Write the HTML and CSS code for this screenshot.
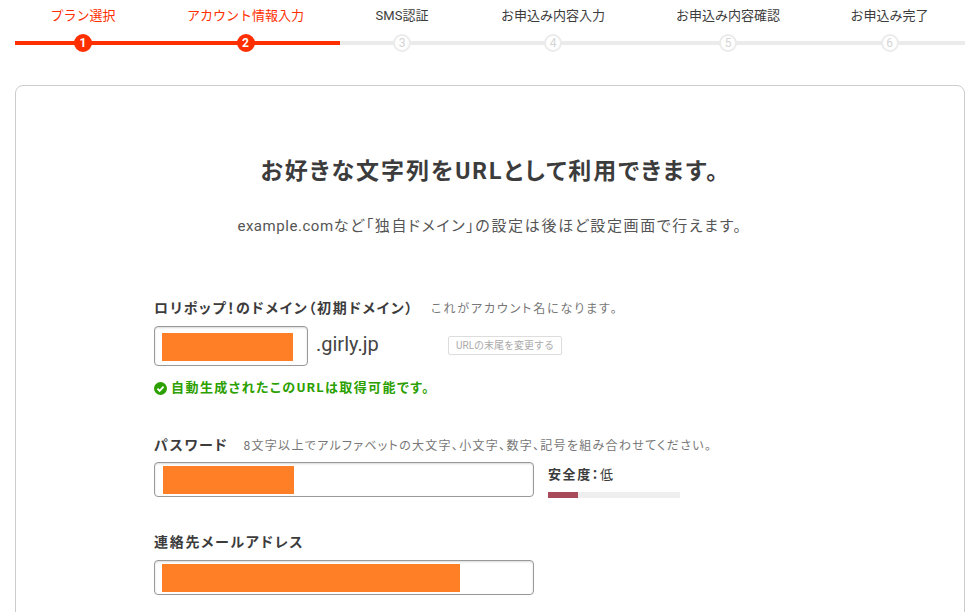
FILE: index.html
```html
<!DOCTYPE html>
<html lang="ja">

<head>
  <meta charset="UTF-8">
  <title>アカウント情報入力</title>
  <link rel="stylesheet" href="styles.css">
</head>

<body>
  <ol class="steps">
    <li class="step done"><span class="step-name">プラン選択</span><span class="step-num">1</span></li>
    <li class="step done"><span class="step-name">アカウント情報入力</span><span class="step-num">2</span></li>
    <li class="step"><span class="step-name">SMS認証</span><span class="step-num">3</span></li>
    <li class="step"><span class="step-name">お申込み内容入力</span><span class="step-num">4</span></li>
    <li class="step"><span class="step-name">お申込み内容確認</span><span class="step-num">5</span></li>
    <li class="step"><span class="step-name">お申込み完了</span><span class="step-num">6</span></li>
  </ol>

  <main class="card">
    <h1 class="title">お好きな文字列をURLとして利用できます。</h1>
    <p class="lead"><span class="lead-domain">example.com</span>など「独自ドメイン」の設定は後ほど設定画面で行えます。</p>

    <section class="group group-domain">
      <div class="label-row">
        <span class="label">ロリポップ！のドメイン（初期ドメイン）</span>
        <span class="hint hint-domain">これがアカウント名になります。</span>
      </div>
      <div class="field-row">
        <div class="field field-domain"><span class="mask mask-domain"></span></div>
        <span class="suffix">.girly.jp</span>
        <button class="change-btn" type="button">URLの末尾を変更する</button>
      </div>
      <p class="ok">
        <svg class="ok-icon" width="13" height="13" viewBox="0 0 13 13">
          <circle cx="6.5" cy="6.5" r="6.5" fill="#2ca000"/>
          <path d="M3.4 6.7 5.6 8.9 9.6 4.6" fill="none" stroke="#fff" stroke-width="1.9"/>
        </svg>
        自動生成されたこのURLは取得可能です。
      </p>
    </section>

    <section class="group group-password">
      <div class="label-row">
        <span class="label">パスワード</span>
        <span class="hint hint-password">8文字以上でアルファベットの大文字、小文字、数字、記号を組み合わせてください。</span>
      </div>
      <div class="field-row">
        <div class="field field-wide"><span class="mask mask-password"></span></div>
        <div class="strength">
          <div class="strength-text"><b>安全度：</b>低</div>
          <div class="strength-bar"><div class="strength-fill" style="width: 23%"></div></div>
        </div>
      </div>
    </section>

    <section class="group group-mail">
      <div class="label-row">
        <span class="label">連絡先メールアドレス</span>
      </div>
      <div class="field field-wide"><span class="mask mask-mail"></span></div>
    </section>
  </main>
</body>
</html>
```

FILE: styles.css
```css
html, body {
  height: 612px;
  overflow: hidden;
}
body {
  margin: 0;
  padding: 0 14px 0 15px;
  background: #fff;
  color: #3c3c3c;
  font-family: Roboto, "Noto Sans CJK JP", sans-serif;
}

/* step bar */
.steps {
  display: grid;
  grid-template-columns: 136px 189px 124px 178px 172px 151px;
  margin: 0;
  padding: 0;
  list-style: none;
}
.step {
  display: flex;
  flex-direction: column;
  align-items: center;
  height: 52px;
  background: linear-gradient(#ebebeb, #ebebeb) 0 41px / 100% 4px no-repeat;
}
.step.done {
  background-image: linear-gradient(#ff2f00, #ff2f00);
}
.step-name {
  height: 34px;
  padding-top: 6px;
  box-sizing: border-box;
  font-size: 13px;
  line-height: 19px;
  white-space: nowrap;
}
.done .step-name {
  color: #ff2f00;
}
.step-num {
  box-sizing: border-box;
  width: 18px;
  height: 18px;
  border: 2px solid #ebebeb;
  border-radius: 50%;
  background: #fff;
  color: #d4d4d4;
  font-size: 12px;
  line-height: 14px;
  text-align: center;
}
.done .step-num {
  border-color: #ff2f00;
  background: #ff2f00;
  color: #fff;
  font-weight: 700;
}

/* card */
.card {
  margin-top: 33px;
  padding: 0 138px 60px;
  height: 700px;
  border: 1px solid #ccc;
  border-radius: 8px;
  font-feature-settings: "palt";
}
.title {
  margin: 0;
  padding-top: 69px;
  font-size: 23px;
  line-height: 34px;
  font-weight: 700;
  letter-spacing: 2px;
  text-align: center;
}
.lead {
  margin: 26px 0 0;
  font-size: 15px;
  line-height: 22px;
  letter-spacing: 1.65px;
  text-align: center;
  color: #555;
}
.lead-domain {
  letter-spacing: 0.55px;
}

/* form */
.group-domain {
  margin-top: 57px;
}
.group-password {
  margin-top: 34px;
}
.group-mail {
  margin-top: 30px;
}
.label-row {
  display: flex;
  align-items: baseline;
  height: 28px;
  line-height: 28px;
}
.group-domain .label-row {
  margin-bottom: 4px;
}
.group-password .label-row {
  margin-bottom: 3px;
}
.group-mail .label-row {
  margin-bottom: 4px;
}
.label {
  font-size: 14px;
  font-weight: 700;
  letter-spacing: 1.7px;
  white-space: nowrap;
}
.hint {
  font-size: 12px;
  color: #777;
  white-space: nowrap;
}
.hint-domain {
  margin-left: 17px;
  letter-spacing: 1.87px;
}
.hint-password {
  margin-left: 15px;
  letter-spacing: 1.3px;
}
.field-row {
  display: flex;
  align-items: flex-start;
}
.field {
  box-sizing: border-box;
  display: flex;
  border: 1px solid #999;
  border-radius: 4px;
  box-shadow: inset 0 1px 2px rgba(0, 0, 0, 0.15);
  background: #fff;
}
.field-domain {
  width: 154px;
  height: 40px;
  padding: 6px 7px;
}
.field-wide {
  width: 380px;
  height: 35px;
  padding: 3px 7px;
}
.mask {
  display: block;
  height: 28px;
  background: #ff7f27;
}
.mask-domain {
  width: 131px;
}
.mask-password {
  width: 131px;
  margin-left: 1px;
}
.mask-mail {
  width: 298px;
}
.suffix {
  width: 62px;
  margin-left: 8px;
  font-size: 20px;
  line-height: 36px;
  color: #444;
}
.change-btn {
  margin: 10px 0 0 70px;
  padding: 0 7px;
  height: 19px;
  border: 1px solid #ddd;
  border-radius: 2px;
  background: #fff;
  color: #aaa;
  font-family: inherit;
  font-size: 10px;
  line-height: 17px;
  white-space: nowrap;
}
.ok {
  display: flex;
  align-items: center;
  gap: 4px;
  margin: 13px 0 0;
  font-size: 13px;
  line-height: 18px;
  font-weight: 700;
  letter-spacing: 1.45px;
  color: #2ca000;
}
.strength {
  margin-left: 14px;
  width: 132px;
}
.strength-text {
  font-size: 13px;
  line-height: 26px;
  letter-spacing: 1.6px;
}
.strength-bar {
  height: 6px;
  margin-top: 4px;
  background: #eee;
}
.strength-fill {
  height: 100%;
  background: #a94a5a;
}
```
